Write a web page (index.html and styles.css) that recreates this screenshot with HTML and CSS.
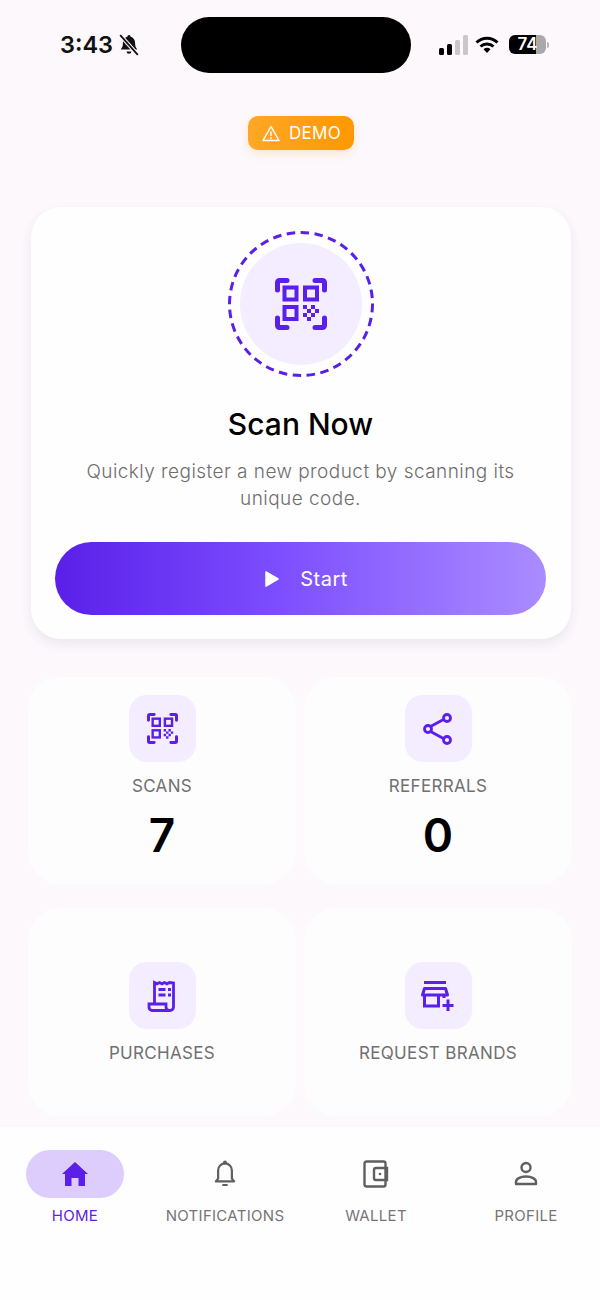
FILE: index.html
```html
<!DOCTYPE html>
<html lang="en">
<head>
    <meta charset="UTF-8">
    <meta name="viewport" content="width=device-width, initial-scale=1.0">
    <title>Home</title>
    <link rel="stylesheet" href="styles.css">
</head>
<body>

<svg class="defs" width="0" height="0">
    <symbol id="qr" viewBox="0 0 52 52">
        <g fill="none" stroke="currentColor" stroke-width="5" stroke-linecap="round" stroke-linejoin="round">
            <path d="M2.500 12V4.500a2 2 0 0 1 2-2H12"/>
            <path d="M40 2.500h7.500a2 2 0 0 1 2 2V12"/>
            <path d="M2.500 40v7.500a2 2 0 0 0 2 2H12"/>
            <path d="M49.500 40v7.500a2 2 0 0 1-2 2H40"/>
        </g>
        <g fill="none" stroke="currentColor" stroke-width="4">
            <rect x="9.500" y="9.500" width="12" height="12"/>
            <rect x="30" y="9.500" width="12" height="12"/>
            <rect x="9.500" y="29" width="12" height="12"/>
        </g>
        <path fill="currentColor" d="M28 27h4v4h-4zM36 27h4v4h-4zM32 31h4v4h-4zM40 31h4v4h-4zM28 35h4v4h-4zM36 35h4v4h-4zM32 39h4v4h-4z"/>
    </symbol>
</svg>

<div class="status-bar">
    <div class="status-left">
        <span class="time">3:43</span>
        <svg class="muted" width="22" height="22" viewBox="0 0 20 20">
            <path fill="#111" d="M10 1a1.500 1.500 0 0 1 1.500 1.500c2.500.7 4 2.800 4 5.500 0 3 .7 4.500 2 6H2.500c1.300-1.500 2-3 2-6 0-2.700 1.500-4.800 4-5.500A1.500 1.500 0 0 1 10 1zM7.800 15.800h4.400a2.200 2.200 0 0 1-4.400 0z"/>
            <path stroke="#fcf8fc" stroke-width="3.500" d="M2 1l16 18"/>
            <path stroke="#111" stroke-width="1.600" d="M2 1l16 18"/>
        </svg>
    </div>
    <div class="island"></div>
    <div class="status-right">
        <div class="signal">
            <span class="bar bar1"></span>
            <span class="bar bar2"></span>
            <span class="bar bar3"></span>
            <span class="bar bar4"></span>
        </div>
        <svg width="24" height="18" viewBox="0 0 24 18">
            <g fill="none" stroke="#000" stroke-width="3">
                <path d="M1.500 6.500a15 15 0 0 1 21 0"/>
                <path d="M5.500 10.500a9.500 9.500 0 0 1 13 0"/>
            </g>
            <path d="M8.500 13.300a5 5 0 0 1 7 0L12 17z"/>
        </svg>
        <div class="battery">
            <div class="battery-body"><span>74</span></div>
            <span class="battery-cap"></span>
        </div>
    </div>
</div>

<div class="demo-row">
    <div class="demo-badge">
        <svg width="18" height="17" viewBox="0 0 18 17">
            <path fill="none" stroke="#fff" stroke-width="1.500" stroke-linejoin="round" d="M9 1.500L17 15.500H1z"/>
            <path stroke="#fff" stroke-width="1.500" d="M9 6.500v4.500"/>
            <circle cx="9" cy="13" r=".9" fill="#fff"/>
        </svg>
        DEMO
    </div>
</div>

<div class="scan-card">
    <div class="scan-ring">
        <svg class="ring-line" width="146" height="146" viewBox="0 0 146 146">
            <circle cx="73" cy="73" r="71.500" fill="none" stroke="#5a1fe8" stroke-width="3" stroke-dasharray="8.500 5.500"/>
        </svg>
        <div class="scan-circle">
            <svg class="scan-icon" width="52" height="52"><use href="#qr"/></svg>
        </div>
    </div>
    <h1 class="scan-title">Scan Now</h1>
    <p class="scan-text">Quickly register a new product by scanning its unique code.</p>
    <button class="start-button">
        <svg width="16" height="18" viewBox="0 0 16 18"><path fill="#fff" stroke="#fff" stroke-width="1.500" stroke-linejoin="round" d="M2 2l12 7-12 7z"/></svg>
        Start
    </button>
</div>

<div class="tiles">
    <div class="tile">
        <div class="tile-icon"><svg width="31" height="31"><use href="#qr"/></svg></div>
        <div class="tile-label">SCANS</div>
        <div class="tile-value">7</div>
    </div>
    <div class="tile">
        <div class="tile-icon">
            <svg width="30" height="32" viewBox="0 0 30 32" fill="none" stroke="currentColor" stroke-width="2.800">
                <path d="M7.500 13.500L20.500 6.500M7.500 18.500L20.500 25.500"/>
                <circle cx="5" cy="16" r="3.500"/>
                <circle cx="24" cy="5" r="3.500"/>
                <circle cx="24" cy="27" r="3.500"/>
            </svg>
        </div>
        <div class="tile-label">REFERRALS</div>
        <div class="tile-value">0</div>
    </div>
    <div class="tile tile-short">
        <div class="tile-icon">
            <svg width="30" height="32" viewBox="0 0 30 32" fill="none" stroke="currentColor" stroke-width="2.800">
                <path d="M7.500 24V2.500l2.500 1.300L12.500 2.500l2.500 1.300 2.500-1.300 2.500 1.300 2.500-1.300 4 .5V27a3.500 3.500 0 0 1-3.500 3.500H5"/>
                <path d="M2 24h17v3a3.500 3.500 0 0 0 3.500 3.500H5A3.500 3.500 0 0 1 2 27z"/>
                <path d="M11.500 9.500h7M21 9.500h3M11.500 15h7M21 15h3"/>
            </svg>
        </div>
        <div class="tile-label">PURCHASES</div>
    </div>
    <div class="tile tile-short">
        <div class="tile-icon">
            <svg width="36" height="32" viewBox="0 0 36 32" fill="none" stroke="currentColor" stroke-width="3">
                <path d="M4 2.500h22"/>
                <path d="M4.500 8.500h21l2 6.500H2.500z" stroke-linejoin="round"/>
                <path d="M4.500 15v11h14V15M24 15v3"/>
                <path d="M28 19.500v11.500M22.500 25.500h11"/>
            </svg>
        </div>
        <div class="tile-label">REQUEST BRANDS</div>
    </div>
</div>

<div class="bottom-nav">
    <div class="nav-item active">
        <div class="nav-icon">
            <svg width="26" height="24" viewBox="0 0 26 24"><path fill="currentColor" d="M13 0l13 12h-3v12h-6.500v-8h-7v8H3V12H0z"/></svg>
        </div>
        <div class="nav-label">HOME</div>
    </div>
    <div class="nav-item">
        <div class="nav-icon">
            <svg width="22" height="28" viewBox="0 0 24 30" fill="none" stroke="currentColor" stroke-width="2.400">
                <path d="M2 23h20l-2.500-3V11a7.500 7.500 0 0 0-15 0v9z" stroke-linejoin="round"/>
                <circle cx="12" cy="2.500" r="1" fill="currentColor"/>
                <path d="M10 27h4" stroke-linecap="round"/>
            </svg>
        </div>
        <div class="nav-label">NOTIFICATIONS</div>
    </div>
    <div class="nav-item">
        <div class="nav-icon">
            <svg width="26" height="28" viewBox="0 0 26 28" fill="none" stroke="currentColor" stroke-width="2.400">
                <rect x="1.500" y="1.500" width="21" height="25" rx="2"/>
                <path d="M13 8h11v12H13a2 2 0 0 1-2-2v-8a2 2 0 0 1 2-2z"/>
                <circle cx="17" cy="14" r="1.300" fill="currentColor" stroke="none"/>
            </svg>
        </div>
        <div class="nav-label">WALLET</div>
    </div>
    <div class="nav-item">
        <div class="nav-icon">
            <svg width="24" height="26" viewBox="0 0 24 26" fill="none" stroke="currentColor" stroke-width="2.400">
                <circle cx="12" cy="6.500" r="4.500"/>
                <path d="M2 23v-2c0-3 4-5.500 10-5.500s10 2.500 10 5.500v2z" stroke-linejoin="round"/>
            </svg>
        </div>
        <div class="nav-label">PROFILE</div>
    </div>
</div>

</body>
</html>
```

FILE: styles.css
```css
body {
    margin: 0;
    width: 600px;
    height: 1300px;
    overflow: hidden;
    background-color: #fcf8fc;
    color: #000;
    font-family: "Inter", "Liberation Sans", sans-serif;
}

.defs {
    position: absolute;
}

/* status bar */
.status-bar {
    display: flex;
    align-items: center;
    height: 56px;
    padding: 17px 0 0 60px;
}

.status-left {
    display: flex;
    align-items: center;
    gap: 5px;
    width: 121px;
    margin-top: -1px;
}

.time {
    font-size: 23.500px;
    font-weight: 600;
    line-height: 28px;
    color: #111;
}

.island {
    width: 230px;
    height: 56px;
    border-radius: 28px;
    background-color: #000;
}

.status-right {
    display: flex;
    align-items: center;
    margin-left: 28px;
    gap: 7px;
    margin-top: -1px;
}

.signal {
    display: flex;
    align-items: flex-end;
    gap: 3px;
    height: 20px;
}

.bar {
    width: 5px;
    border-radius: 1.500px;
    background-color: #c9c7cb;
}

.bar1 { height: 7px; background-color: #000; }
.bar2 { height: 11px; background-color: #000; }
.bar3 { height: 15px; }
.bar4 { height: 20px; }

.battery {
    display: flex;
    align-items: center;
    gap: 1px;
    margin-left: 3px;
}

.battery-body {
    width: 37px;
    height: 19px;
    border-radius: 6px;
    background: linear-gradient(to right, #000 74%, #a9a8aa 74%);
    color: #fff;
    font-size: 17px;
    font-weight: 600;
    line-height: 19px;
    text-align: center;
}

.battery-cap {
    width: 2px;
    height: 6px;
    border-radius: 0 2px 2px 0;
    background-color: #b5b4b6;
}

/* demo badge */
.demo-row {
    display: flex;
    justify-content: center;
    margin-top: 43px;
    padding-left: 2px;
}

.demo-badge {
    display: flex;
    align-items: center;
    gap: 9px;
    width: 106px;
    height: 34px;
    box-sizing: border-box;
    padding-left: 14px;
    border-radius: 10px;
    background: linear-gradient(to right, #ffa726, #ff9800);
    box-shadow: 0 4px 10px rgba(255, 152, 0, 0.18);
    color: #fff;
    font-size: 17px;
    font-weight: 400;
    letter-spacing: 0.3px;
}

/* scan card */
.scan-card {
    display: flex;
    flex-direction: column;
    align-items: center;
    box-sizing: border-box;
    width: 540px;
    height: 432px;
    margin: 57px 0 0 31px;
    padding: 24px 25px 0 24px;
    border-radius: 30px;
    background-color: #fffefe;
    box-shadow: 0 5px 12px rgba(70, 50, 90, 0.09);
}

.scan-ring {
    position: relative;
    display: flex;
    align-items: center;
    justify-content: center;
    width: 146px;
    height: 146px;
    flex-shrink: 0;
}

.ring-line {
    position: absolute;
    top: 0;
    left: 0;
}

.scan-circle {
    display: flex;
    align-items: center;
    justify-content: center;
    width: 122px;
    height: 122px;
    border-radius: 50%;
    background-color: #f3edff;
}

.scan-icon {
    color: #5a1fe8;
}

.scan-title {
    margin: 27px 0 0;
    font-size: 30px;
    font-weight: 500;
    line-height: 40px;
    color: #000;
}

.scan-text {
    margin: 14px 0 0;
    width: 460px;
    font-size: 19px;
    font-weight: 300;
    line-height: 27px;
    letter-spacing: 0.45px;
    color: #6e6e6e;
    text-align: center;
}

.start-button {
    display: flex;
    align-items: center;
    justify-content: center;
    gap: 20px;
    flex-shrink: 0;
    width: 491px;
    height: 73px;
    margin-top: 30px;
    padding: 0 0 0 11px;
    border: none;
    border-radius: 37px;
    background: linear-gradient(to right, #5a1fe8, #7c4dff 45%, #ab8cff);
    color: #fff;
    font-family: inherit;
    font-size: 20px;
    font-weight: 400;
    letter-spacing: 0.5px;
}

/* tiles */
.tiles {
    display: grid;
    grid-template-columns: 268px 268px;
    gap: 24px 8px;
    margin-top: 38px;
    padding-left: 28px;
}

.tile {
    display: flex;
    flex-direction: column;
    align-items: center;
    box-sizing: border-box;
    height: 207px;
    padding-top: 18px;
    border-radius: 34px;
    background-color: #fefdfe;
    box-shadow: 0 0 8px #fdfbfd;
}

.tile-short {
    height: 208px;
    padding-top: 54px;
}

.tile-icon {
    display: flex;
    align-items: center;
    justify-content: center;
    width: 67px;
    height: 67px;
    border-radius: 18px;
    background-color: #f3edff;
    color: #5a1fe8;
}

.tile-label {
    margin-top: 14px;
    font-size: 17px;
    line-height: 20px;
    letter-spacing: 0.33px;
    color: #707070;
}

.tile-value {
    margin-top: 14px;
    font-size: 46px;
    font-weight: 600;
    line-height: 50px;
    color: #000;
}

/* bottom nav */
.bottom-nav {
    display: grid;
    grid-template-columns: 150px 150px 152px 148px;
    margin-top: 11px;
    height: 174px;
    box-sizing: border-box;
    padding-top: 23px;
    background-color: #fffeff;
}

.nav-item {
    display: flex;
    flex-direction: column;
    align-items: center;
    color: #5f5f5f;
}

.nav-item.active {
    color: #5a1fe8;
}

.nav-icon {
    display: flex;
    align-items: center;
    justify-content: center;
    width: 98px;
    height: 48px;
    border-radius: 24px;
}

.active .nav-icon {
    background-color: #dccdfd;
}

.nav-label {
    margin-top: 9px;
    font-size: 15px;
    line-height: 18px;
    letter-spacing: 0.3px;
    color: #757575;
    white-space: nowrap;
}

.active .nav-label {
    color: #5a1fe8;
}
```
